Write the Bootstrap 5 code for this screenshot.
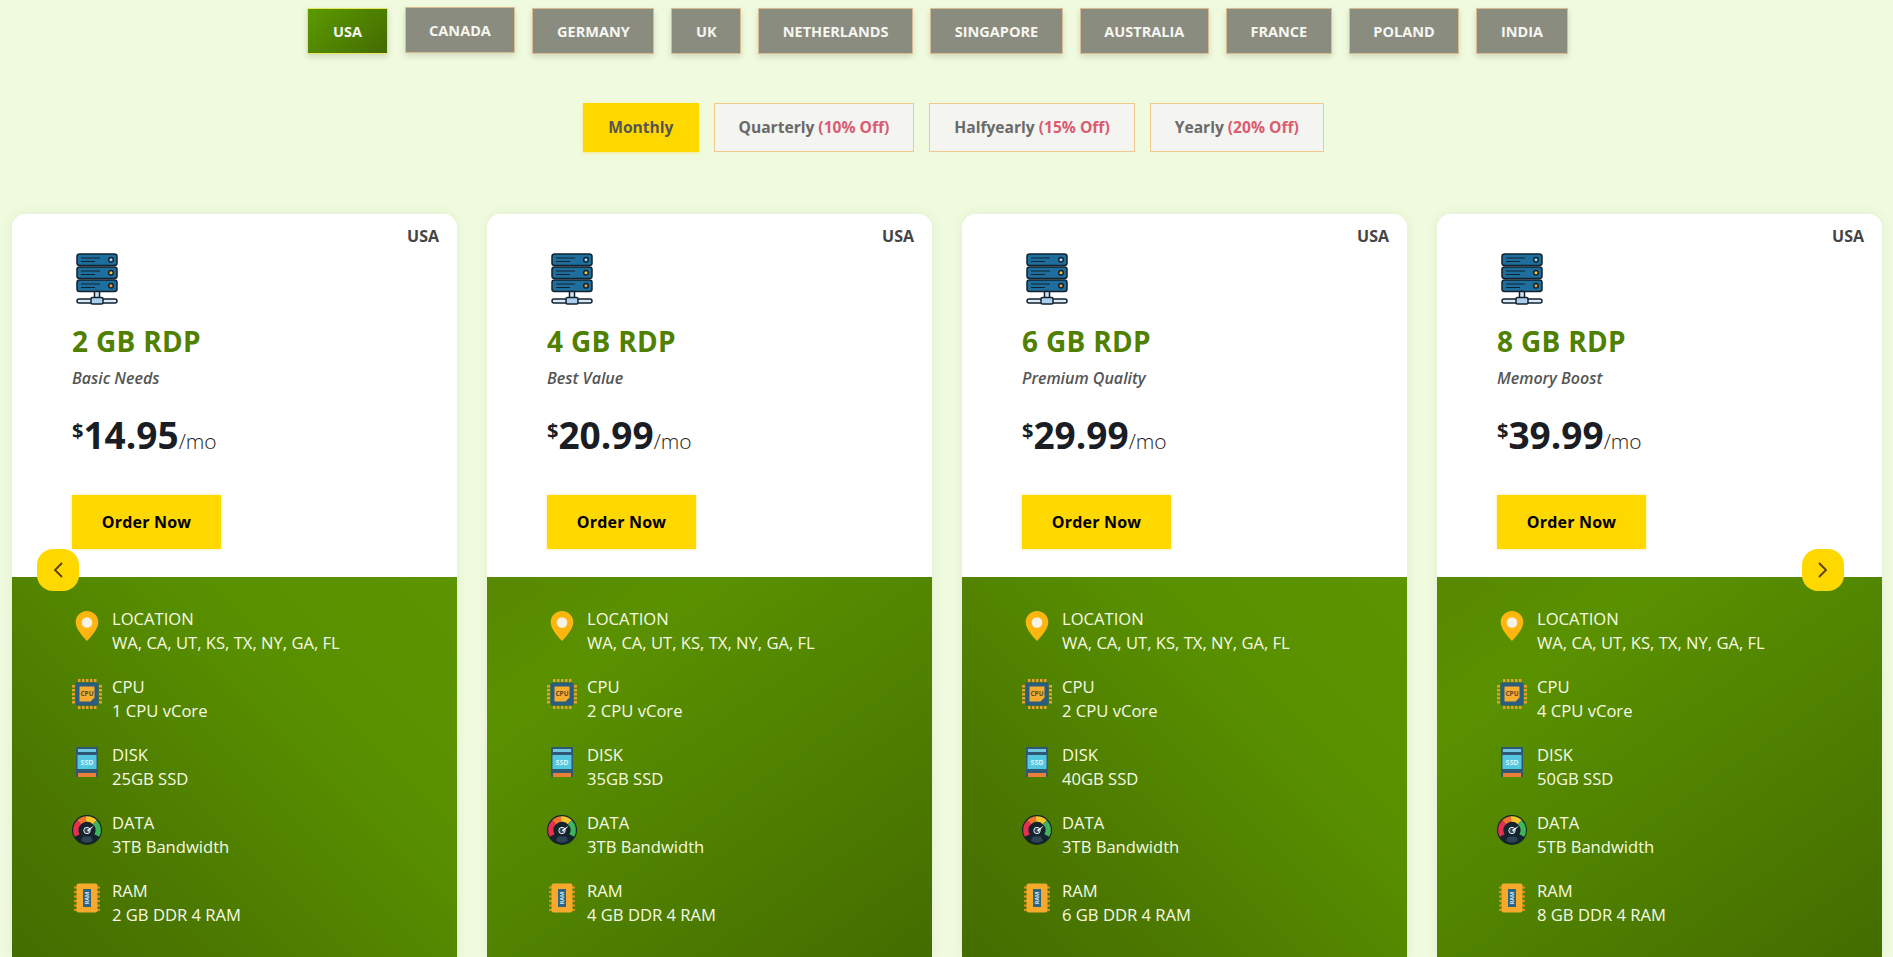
<!DOCTYPE html>
<html lang="en">
<head>
    <meta charset="UTF-8">
    <meta name="viewport" content="width=device-width, initial-scale=1.0">
    <title>RDP Plans</title>
    <link href="https://cdn.jsdelivr.net/npm/bootstrap@5.3.3/dist/css/bootstrap.min.css" rel="stylesheet">
    <style>
        html, body { height: 957px; overflow: hidden; }
        body { background: #f0fade; font-family: "Open Sans", sans-serif; color: #212529; }

        .country-bar { gap: 17px; padding-top: 8px; padding-right: 18px; }
        .country-btn {
            height: 46px; padding: 1px 23.6px 0; border-radius: 0; font-size: 14.5px; font-weight: 700; color: #f6f6f0;
            background: #8b8c80; border: 1px solid #d8bd94; box-shadow: 0 3px 6px rgba(90, 90, 60, .2);
            display: flex; align-items: center;
        }
        .country-btn.is-active {
            background: linear-gradient(135deg, #5c9a00, #436b00); border-color: #e8e860; padding: 1px 24.6px 0;
        }
        .country-btn.is-raised { margin-top: -1px; margin-bottom: 1px; }

        .period-bar { gap: 15px; margin-top: 49px; padding-left: 14px; }
        .period-btn {
            height: 49px; padding: 0 24px; border-radius: 0; font-size: 15.6px; font-weight: 700; color: #6a6a6a;
            background: #f4f4f0; border: 1px solid #f3c98b; display: flex; align-items: center; gap: 4px;
        }
        .period-btn.is-active { background: #ffd800; border-color: #ffd800; color: #555; box-shadow: 0 1px 3px rgba(255, 216, 0, .4); }
        .period-off { color: #d95c72; }

        .plan-wrap { margin: 62px 11px 0 12px; gap: 30px; position: relative; }
        .plan-card {
            flex: 0 0 445px; border: 0; border-radius: 14px 14px 0 0; overflow: hidden;
            box-shadow: 0 0 12px rgba(70, 90, 40, .08);
        }
        .plan-top { height: 363px; padding: 10px 18px 0 60px; background: #fff; }
        .plan-region { font-size: 16px; font-weight: 700; color: #444; text-align: right; line-height: 24px; }
        .plan-server { display: block; width: 44px; height: 52px; margin: 5px 0 0 3px; }
        .plan-title { font-size: 28px; font-weight: 700; color: #4f8000; margin: 19px 0 0; line-height: 34px; letter-spacing: .3px; }
        .plan-sub { font-size: 16px; font-weight: 600; font-style: italic; color: #555; line-height: 24px; margin: 8px 0 0; }
        .plan-price { font-size: 37px; font-weight: 700; line-height: 43px; margin: 23px 0 0; color: #1a1d24; }
        .plan-price sup { font-size: 20px; font-weight: 700; top: -.55em; }
        .plan-price span { font-size: 21px; font-weight: 300; color: #222; }
        .order-btn {
            display: block; width: 149px; height: 54px; margin-top: 32px; padding: 0; border: 0; border-radius: 0;
            line-height: 54px; background: #ffd800; color: #000; font-size: 16px; font-weight: 700; letter-spacing: .2px;
            box-shadow: 0 0 3px rgba(255, 225, 90, .7);
        }
        .plan-bottom { height: 380px; padding: 30px 0 0 60px; background: linear-gradient(145deg, #588800 0%, #5a9100 22%, #4f8000 60%, #446c00 100%); }
        .plan-card:nth-child(odd) .plan-bottom { background: linear-gradient(225deg, #5c9500 0%, #588f00 35%, #4c7900 72%, #446d00 100%); }
        .spec-row { display: flex; margin-bottom: 20px; color: #f7fbe4; font-size: 16.6px; line-height: 24px; }
        .spec-icon { flex: 0 0 30px; width: 30px; height: 30px; margin: 4px 10px 0 0; }

        .slide-btn {
            position: absolute; top: 335px; width: 42px; height: 42px; padding: 0; border: 0; border-radius: 16px;
            background: #ffd800; display: flex; align-items: center; justify-content: center;
        }
        .slide-prev { left: 25px; }
        .slide-next { right: 38px; }
    </style>
</head>
<body>

    <div id="country-tabs" class="d-flex justify-content-center country-bar"></div>

    <div class="d-flex justify-content-center period-bar">
        <button class="btn period-btn is-active">Monthly</button>
        <button class="btn period-btn">Quarterly <span class="period-off">(10% Off)</span></button>
        <button class="btn period-btn">Halfyearly <span class="period-off">(15% Off)</span></button>
        <button class="btn period-btn">Yearly <span class="period-off">(20% Off)</span></button>
    </div>

    <div id="plan-list" class="d-flex plan-wrap"></div>

    <script>
        document.addEventListener('DOMContentLoaded', () => {

            const countries = ['USA', 'CANADA', 'GERMANY', 'UK', 'NETHERLANDS', 'SINGAPORE', 'AUSTRALIA', 'FRANCE', 'POLAND', 'INDIA'];

            const plans = [
                { ram: 2, sub: 'Basic Needs', price: '14.95', cpu: 1, disk: 25, data: 3 },
                { ram: 4, sub: 'Best Value', price: '20.99', cpu: 2, disk: 35, data: 3 },
                { ram: 6, sub: 'Premium Quality', price: '29.99', cpu: 2, disk: 40, data: 3 },
                { ram: 8, sub: 'Memory Boost', price: '39.99', cpu: 4, disk: 50, data: 5 }
            ];

            // icon bodies, all drawn on a 30x30 box except the server one
            const icons = {
                pin: `<path d="M15 0C8.6 0 3.7 5 3.7 11.2 3.7 18 11 25.5 15 30c4-4.5 11.3-12 11.3-18.8C26.3 5 21.4 0 15 0z" fill="#fdb60f"/>
                      <circle cx="15" cy="11.5" r="5.3" fill="#f6f2e6"/>`,
                cpu: `<rect x="3.5" y="3.5" width="23" height="23" rx="1.5" fill="#2b5d80"/>
                      <path d="M6 1.5h2.500M10 1.500h2.500M14 1.500h2.500M18 1.500h2.500M22 1.500h2.500M6 28.500h2.500M10 28.500h2.500M14 28.500h2.500M18 28.500h2.500M22 28.500h2.500M1.500 6v2.500M1.500 10v2.500M1.500 14v2.500M1.500 18v2.500M1.500 22v2.500M28.500 6v2.500M28.500 10v2.500M28.500 14v2.500M28.500 18v2.500M28.500 22v2.500" stroke="#e7a032" stroke-width="3"/>
                      <path d="M7.500 7.500h15v11l-4 4h-11z" fill="#f5ac2f"/>
                      <text x="15" y="17" font-size="6.500" font-weight="700" text-anchor="middle" font-family="Open Sans, sans-serif" fill="#5a4a20">CPU</text>`,
                ssd: `<rect x="4" y="0" width="22" height="30" rx="1" fill="#2f5874"/>
                      <rect x="6" y="2" width="18" height="3" fill="#6fc7e0"/>
                      <rect x="5.500" y="8" width="19" height="14" fill="#55c6df"/>
                      <text x="15" y="17.500" font-size="7" font-weight="700" text-anchor="middle" font-family="Open Sans, sans-serif" fill="#d9f4fb">SSD</text>
                      <rect x="6" y="26" width="18" height="4" fill="#e9803a"/>`,
                gauge: `<circle cx="15" cy="15" r="15" fill="#15232d"/>
                      <path d="M5.200 20.500A11 11 0 0 1 7.200 7.200" fill="none" stroke="#e6304f" stroke-width="5.500"/>
                      <path d="M7.200 7.200A11 11 0 0 1 14 4" fill="none" stroke="#f1752f" stroke-width="5.500"/>
                      <path d="M14 4A11 11 0 0 1 22.800 7.200" fill="none" stroke="#f5c52e" stroke-width="5.500"/>
                      <path d="M22.800 7.200A11 11 0 0 1 24.800 20.500" fill="none" stroke="#3fb55c" stroke-width="5.500"/>
                      <circle cx="15" cy="15.500" r="3.200" fill="#2f4a5c" stroke="#e8eef2"/>
                      <path d="M15 15l7-4.500-5.800 6.500z" fill="#eef2f4"/>
                      <path d="M9 25.500a9 9 0 0 0 12 0l-2-4h-8z" fill="#2c4454"/>`,
                ram: `<path d="M2 4.500h26M2 9h26M2 13.500h26M2 18h26M2 22.500h26M2 27h26" stroke="#dd8f22" stroke-width="2.200"/>
                      <rect x="4.500" y="0.500" width="21" height="29" rx="2" fill="#f6a92b"/>
                      <rect x="11" y="6" width="8" height="18" fill="#2d6484"/>
                      <text x="15" y="17" font-size="5.500" font-weight="700" text-anchor="middle" font-family="Open Sans, sans-serif" fill="#d8ecf5" transform="rotate(-90 15 15)">RAM</text>`
            };

            const serverIcon = `
                <svg class="plan-server" viewBox="0 0 44 52">
                    <g stroke="#12222e" stroke-width="1.500">
                        <rect x="2" y="1" width="40" height="11.500" rx="2.500" fill="#1f6f9e"/>
                        <rect x="2" y="14" width="40" height="11.500" rx="2.500" fill="#1f6f9e"/>
                        <rect x="2" y="27" width="40" height="11.500" rx="2.500" fill="#1f6f9e"/>
                        <path d="M6 5h19M6 8.500h14M6 18h19M6 21.500h14M6 31h19M6 34.500h14" fill="none" stroke-width="1"/>
                        <circle cx="36" cy="6.700" r="2.300" fill="#a6d4ee"/>
                        <circle cx="36" cy="19.700" r="2.300" fill="#f6c53c"/>
                        <circle cx="36" cy="32.700" r="2.300" fill="#ee9a3a"/>
                        <rect x="19.500" y="38.500" width="5" height="6.500" fill="#cfe4f4"/>
                        <rect x="2" y="46" width="40" height="4" rx="2" fill="#dcebf7"/>
                        <rect x="16" y="44.500" width="12" height="6.500" rx="1.500" fill="#a9cdea"/>
                    </g>
                </svg>`;

            document.getElementById('country-tabs').innerHTML = countries.map((name, i) => {
                const state = i === 0 ? ' is-active' : (i === 1 ? ' is-raised' : '');
                return `<button class="btn country-btn${state}">${name}</button>`;
            }).join('');

            const spec = (icon, label, value) => `
                <div class="spec-row">
                    <svg class="spec-icon" viewBox="0 0 30 30">${icons[icon]}</svg>
                    <div>${label}<br>${value}</div>
                </div>`;

            const planCards = plans.map(plan => `
                <div class="card plan-card">
                    <div class="plan-top">
                        <div class="plan-region">USA</div>
                        ${serverIcon}
                        <h3 class="plan-title">${plan.ram} GB RDP</h3>
                        <p class="plan-sub">${plan.sub}</p>
                        <p class="plan-price"><sup>$</sup>${plan.price}<span>/mo</span></p>
                        <a href="#" class="btn order-btn">Order Now</a>
                    </div>
                    <div class="plan-bottom">
                        ${spec('pin', 'LOCATION', 'WA, CA, UT, KS, TX, NY, GA, FL')}
                        ${spec('cpu', 'CPU', `${plan.cpu} CPU vCore`)}
                        ${spec('ssd', 'DISK', `${plan.disk}GB SSD`)}
                        ${spec('gauge', 'DATA', `${plan.data}TB Bandwidth`)}
                        ${spec('ram', 'RAM', `${plan.ram} GB DDR 4 RAM`)}
                    </div>
                </div>`).join('');

            const arrow = (cls, d) => `
                <button class="btn slide-btn ${cls}">
                    <svg width="12" height="18" viewBox="0 0 12 18"><path d="${d}" fill="none" stroke="#5a3d00" stroke-width="1.800"/></svg>
                </button>`;

            document.getElementById('plan-list').innerHTML = planCards
                + arrow('slide-prev', 'M10 2 3 9l7 7')
                + arrow('slide-next', 'M2 2l7 7-7 7');
        });
    </script>
    <script src="https://cdn.jsdelivr.net/npm/bootstrap@5.3.3/dist/js/bootstrap.bundle.min.js"></script>
</body>
</html>
